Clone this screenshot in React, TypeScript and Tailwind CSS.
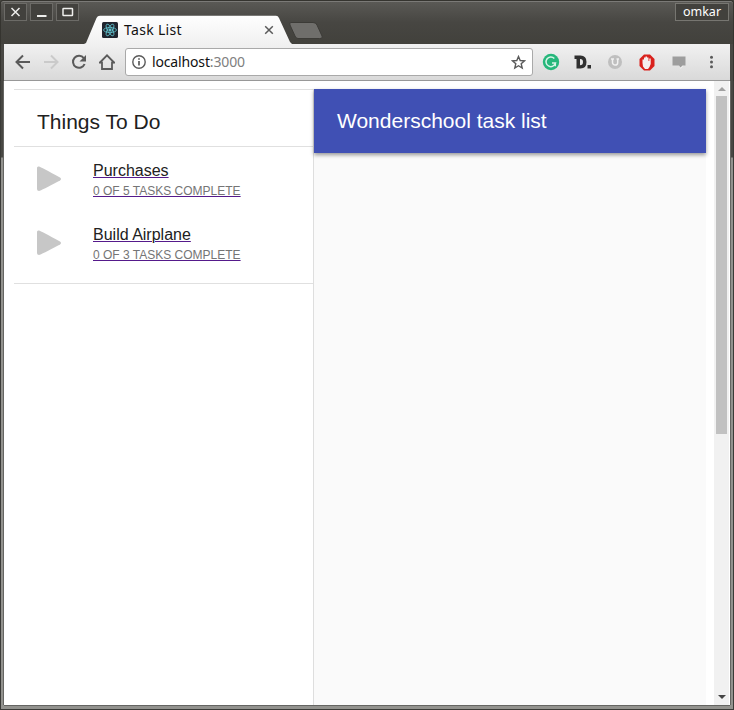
import React from "react";

const ui = "font-['Noto_Sans','Open_Sans',sans-serif]";

function WindowButton({ children }: { children: React.ReactNode }) {
  return (
    <div className="flex h-[18px] w-[23px] items-center justify-center border border-[#6c6b67] bg-[#42413d]">
      <svg width="15" height="14" viewBox="0 0 15 14" fill="none" stroke="#eeeeec" strokeWidth="1.5">
        {children}
      </svg>
    </div>
  );
}

function TitleBar() {
  return (
    <header className="relative flex h-11 items-start justify-between rounded-t-[3px] border-x border-t border-[#35342f] bg-linear-to-b from-[#5b5a56] via-[#474642] via-50% to-[#42413c] pt-[2px] pr-[4px] pl-[3px] shadow-[inset_0_1px_0_#7b7a77]">
      <div className="flex gap-[3px]">
        <WindowButton>
          <path d="M3.500 3l8 8M11.500 3l-8 8" />
        </WindowButton>
        <WindowButton>
          <path d="M3 11h9.500" strokeWidth="2" />
        </WindowButton>
        <WindowButton>
          <rect x="3" y="3.500" width="9.500" height="7" rx="0.500" />
        </WindowButton>
      </div>
      <div className={`flex h-[18px] w-[54px] items-center justify-center border border-[#777671] bg-[#42413d] pt-px text-[12.500px] leading-none text-white ${ui}`}>
        omkar
      </div>
      <svg className="absolute top-[14px] left-[83px]" width="244" height="29" viewBox="0 0 244 29">
        <defs>
          <linearGradient id="tab" x1="0" y1="0" x2="0" y2="1">
            <stop stopColor="#fefefe" />
            <stop offset="1" stopColor="#f1f1f1" />
          </linearGradient>
        </defs>
        <path d="M0 29L2 28 12.500 3Q13.500 0.800 16 0.800H192Q194 0.800 195 3L206 27 208 29Z" fill="url(#tab)" />
        <path d="M207 7.500H229Q232 7.500 233 10L238 21Q239 23.500 235.500 23.500H214Q212 23.500 211 21L206 10Q205 7.500 207 7.500Z" fill="#6f6e6b" stroke="#3c3b37" />
      </svg>
      <div className="absolute top-[17px] left-[101px] flex h-6 w-[172px] items-center">
        <svg width="16" height="16" viewBox="0 0 16 16" fill="none" stroke="#61c4cf" strokeWidth="0.800">
          <rect width="16" height="16" rx="1.500" fill="#20242e" stroke="none" />
          <ellipse cx="8" cy="8" rx="6.500" ry="2.500" />
          <ellipse cx="8" cy="8" rx="6.500" ry="2.500" transform="rotate(60 8 8)" />
          <ellipse cx="8" cy="8" rx="6.500" ry="2.500" transform="rotate(120 8 8)" />
          <circle cx="8" cy="8" r="1.200" fill="#61c4cf" />
        </svg>
        <span className={`ml-[6px] text-[14px] leading-none tracking-[0.32px] text-[#111] ${ui}`}>Task List</span>
        <svg className="ml-auto" width="10" height="10" viewBox="0 0 10 10" fill="none" stroke="#5a5a5a" strokeWidth="1.500">
          <path d="M1.200 1.200l7.600 7.600M8.800 1.200L1.200 8.800" />
        </svg>
      </div>
    </header>
  );
}

function Toolbar() {
  return (
    <div className="flex h-[37px] border-x border-[#35342f] px-[3px]">
      <div className="flex flex-1 items-center border-b border-[#989898] bg-linear-to-b from-[#f1f1f1] to-[#d9d9d9] pl-[9px]">
        <div className="flex w-28 items-center gap-[8px]">
          <svg width="20" height="20" viewBox="0 0 20 20" fill="none" stroke="#5a5a5a" strokeWidth="2">
            <path d="M17 10H4M10 3.500L3.500 10l6.500 6.500" />
          </svg>
          <svg width="20" height="20" viewBox="0 0 20 20" fill="none" stroke="#cacaca" strokeWidth="2">
            <path d="M3 10h13M10 3.500l6.500 6.500-6.500 6.500" />
          </svg>
          <svg width="20" height="20" viewBox="0 0 20 20" fill="none" stroke="#5a5a5a" strokeWidth="2">
            <path d="M14.800 6.200A6 6 0 1 0 15.600 12" />
            <path d="M17 3v6.500h-6.500z" fill="#5a5a5a" stroke="none" />
          </svg>
          <svg width="20" height="20" viewBox="0 0 20 20" fill="none" stroke="#5a5a5a" strokeWidth="1.800">
            <path d="M2.500 11L10 3.300l7.500 7.700M2 10.700h3V17h10v-6.300h3" />
          </svg>
        </div>
        <div className="flex h-7 w-[408px] items-center rounded-[3px] border border-[#a9a9a9] bg-white pr-[6px] pl-[6px]">
          <svg width="14" height="14" viewBox="0 0 14 14" fill="none" stroke="#5a5a5a" strokeWidth="1.400">
            <circle cx="7" cy="7" r="6.200" />
            <path d="M7 6v4.500M7 3.300v1.500" strokeWidth="1.700" />
          </svg>
          <span className={`ml-[6px] text-[14px] leading-none tracking-[-0.150px] text-[#111] ${ui}`}>
            localhost<span className="text-[#808080]">:3000</span>
          </span>
          <svg className="ml-auto" width="15" height="15" viewBox="0 0 15 15" fill="none" stroke="#5a5a5a" strokeWidth="1.400">
            <path d="M7.500 1.500l1.700 4 4.300.4-3.300 2.800 1 4.300-3.700-2.300L3.800 13l1-4.300L1.500 5.900l4.300-.4z" />
          </svg>
        </div>
        <div className="ml-[9px] flex items-center">
          <svg width="18" height="18" viewBox="0 0 18 18" fill="none">
            <circle cx="9" cy="9" r="8.200" fill="#26b77b" />
            <path d="M12.300 5.500A4.800 4.800 0 1 0 13.500 10H10M13.300 9.300v4" stroke="#d8f4e8" strokeWidth="1.500" />
          </svg>
          <svg className="ml-[14px]" width="18" height="18" viewBox="0 0 18 18">
            <path fillRule="evenodd" d="M0.500 2.500H6.500Q12.500 2.500 12.500 9T6.500 15.500H2.500V6H0.500zM6 6v6.200Q9 12.200 9 9T6 6z" fill="#303030" />
            <path d="M13.500 12H17v3.500H13.500z" fill="#303030" />
          </svg>
          <svg className="ml-[15px]" width="16" height="16" viewBox="0 0 16 16" fill="none">
            <circle cx="8" cy="8" r="7" fill="#bfbfbf" />
            <path d="M4 5h3M9.500 5h2.500M5.500 5v3.500a2.600 2.600 0 0 0 5.200 0V5" stroke="#f1f1f1" strokeWidth="1.500" />
          </svg>
          <svg className="ml-[16px]" width="16" height="17" viewBox="0 0 16 17">
            <path d="M5 0.500h6L15.500 5v7L11 16.500H5L0.500 12V5z" fill="#d9211c" />
            <path d="M3.500 9V5.500H5V3.500h1.500V2.500H8v1h1.500V7h.8V4.500h1.400V10L10.500 13l-1.500 2H6L4 12.500z" fill="#f5eeee" />
          </svg>
          <svg className="ml-[16px]" width="16" height="17" viewBox="0 0 16 17">
            <path d="M8 11h5l-3.500 4z" fill="#f1f1f1" />
            <path d="M1.500 2.500h13v9h-3L9.500 13.500 8 11.500H1.500z" fill="#9d9d9d" />
          </svg>
          <svg className="ml-[19px]" width="10" height="16" viewBox="0 0 10 16" fill="#5a5a5a">
            <circle cx="5.500" cy="3.200" r="1.500" />
            <circle cx="5.500" cy="8" r="1.500" />
            <circle cx="5.500" cy="12.800" r="1.500" />
          </svg>
        </div>
      </div>
    </div>
  );
}

function TaskGroup({ name, progress }: { name: string; progress: string }) {
  return (
    <a className="flex h-16 items-start pt-[13px] pl-[23px]">
      <svg className="mt-[6px]" width="26" height="26" viewBox="0 0 26 26">
        <path d="M0 2Q0 0 2 0.500 4 1 23 11.500 25 13 23 14.500 4 24.500 2 25 0 25 0 23Z" fill="#c7c7c7" />
      </svg>
      <span className="ml-[30px] flex flex-col text-left">
        <span className="text-[16px] leading-[22px] text-[#212121] underline decoration-[#551a8b] decoration-1">{name}</span>
        <span className="text-[12px] leading-[18px] text-[#757575] underline decoration-[#551a8b] decoration-1">{progress}</span>
      </span>
    </a>
  );
}

export default function App() {
  return (
    <div className="flex h-[710px] w-[734px] flex-col overflow-hidden bg-[#494844] font-['Liberation_Sans',Arial,sans-serif]">
      <TitleBar />
      <Toolbar />
      <div className="flex h-[629px] border-x border-b border-[#3b3b38] bg-linear-to-b from-[#484743] from-[76px] to-[#92928e] to-[77px] px-[3px] pb-[4px]">
        <div className="flex flex-1 bg-white shadow-[-1px_0_0_#656562,1px_0_0_#656562,0_1px_0_#656562]">
          <main className="ml-[10px] flex w-[692px] pt-[8px]">
            <section className="w-[300px] border-r border-[#dedede]">
              <h1 className="flex h-[58px] items-center border-y border-[#e0e0e0] pt-[8px] pl-[23px] text-[21px] text-[#212121]">
                Things To Do
              </h1>
              <div className="h-[137px] border-b border-[#e0e0e0]">
                <TaskGroup name="Purchases" progress="0 OF 5 TASKS COMPLETE" />
                <TaskGroup name="Build Airplane" progress="0 OF 3 TASKS COMPLETE" />
              </div>
            </section>
            <section className="flex-1 bg-[#fafafa]">
              <div className="flex h-16 items-center bg-[#4050b4] pl-[23px] text-[21px] text-white shadow-[0_2px_4px_rgba(0,0,0,0.4)]">
                Wonderschool task list
              </div>
            </section>
          </main>
          <div className="mr-px ml-auto flex w-[15px] flex-col items-center bg-[#f1f1f1]">
            <svg className="mt-[6px]" width="8" height="4" viewBox="0 0 8 4">
              <path d="M0 4L4 0l4 4z" fill="#a0a0a0" />
            </svg>
            <div className="mt-[5px] h-[338px] w-[11px] bg-[#c1c1c1]" />
            <svg className="mt-auto mb-[6px]" width="8" height="4" viewBox="0 0 8 4">
              <path d="M0 0h8L4 4z" fill="#444" />
            </svg>
          </div>
        </div>
      </div>
    </div>
  );
}
